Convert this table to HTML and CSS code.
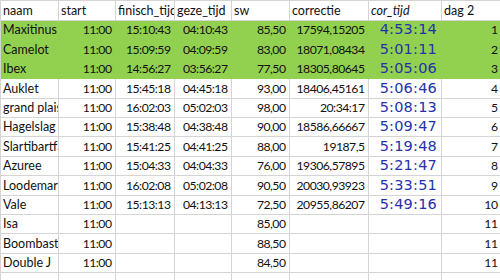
FILE: index.html
```html
<!DOCTYPE html>
<html>
<head>
<meta charset="utf-8">
<link rel="stylesheet" href="styles.css">
</head>
<body>
<div class="sheet">
  <div class="row head">
    <div class="cell">naam</div><div class="cell">start</div><div class="cell">finisch_tijd</div><div class="cell">geze_tijd</div><div class="cell">sw</div><div class="cell">correctie</div><div class="cell it">cor_tijd</div><div class="cell">dag 2</div>
  </div>
  <div class="row hl">
    <div class="cell">Maxitinus</div><div class="cell r">11:00</div><div class="cell r">15:10:43</div><div class="cell r">04:10:43</div><div class="cell r">85,50</div><div class="cell r">17594,15205</div><div class="cell big">4:53:14</div><div class="cell r">1</div>
  </div>
  <div class="row hl">
    <div class="cell">Camelot</div><div class="cell r">11:00</div><div class="cell r">15:09:59</div><div class="cell r">04:09:59</div><div class="cell r">83,00</div><div class="cell r">18071,08434</div><div class="cell big">5:01:11</div><div class="cell r">2</div>
  </div>
  <div class="row hl">
    <div class="cell">Ibex</div><div class="cell r">11:00</div><div class="cell r">14:56:27</div><div class="cell r">03:56:27</div><div class="cell r">77,50</div><div class="cell r">18305,80645</div><div class="cell big">5:05:06</div><div class="cell r">3</div>
  </div>
  <div class="row">
    <div class="cell">Auklet</div><div class="cell r">11:00</div><div class="cell r">15:45:18</div><div class="cell r">04:45:18</div><div class="cell r">93,00</div><div class="cell r">18406,45161</div><div class="cell big">5:06:46</div><div class="cell r">4</div>
  </div>
  <div class="row">
    <div class="cell">grand plaisir</div><div class="cell r">11:00</div><div class="cell r">16:02:03</div><div class="cell r">05:02:03</div><div class="cell r">98,00</div><div class="cell r">20:34:17</div><div class="cell big">5:08:13</div><div class="cell r">5</div>
  </div>
  <div class="row">
    <div class="cell">Hagelslag</div><div class="cell r">11:00</div><div class="cell r">15:38:48</div><div class="cell r">04:38:48</div><div class="cell r">90,00</div><div class="cell r">18586,66667</div><div class="cell big">5:09:47</div><div class="cell r">6</div>
  </div>
  <div class="row">
    <div class="cell">Slartibartfast</div><div class="cell r">11:00</div><div class="cell r">15:41:25</div><div class="cell r">04:41:25</div><div class="cell r">88,00</div><div class="cell r">19187,5</div><div class="cell big">5:19:48</div><div class="cell r">7</div>
  </div>
  <div class="row">
    <div class="cell">Azuree</div><div class="cell r">11:00</div><div class="cell r">15:04:33</div><div class="cell r">04:04:33</div><div class="cell r">76,00</div><div class="cell r">19306,57895</div><div class="cell big">5:21:47</div><div class="cell r">8</div>
  </div>
  <div class="row">
    <div class="cell">Loodemar</div><div class="cell r">11:00</div><div class="cell r">16:02:08</div><div class="cell r">05:02:08</div><div class="cell r">90,50</div><div class="cell r">20030,93923</div><div class="cell big">5:33:51</div><div class="cell r">9</div>
  </div>
  <div class="row">
    <div class="cell">Vale</div><div class="cell r">11:00</div><div class="cell r">15:13:13</div><div class="cell r">04:13:13</div><div class="cell r">72,50</div><div class="cell r">20955,86207</div><div class="cell big">5:49:16</div><div class="cell r">10</div>
  </div>
  <div class="row">
    <div class="cell">Isa</div><div class="cell r">11:00</div><div class="cell"></div><div class="cell"></div><div class="cell r">85,00</div><div class="cell"></div><div class="cell"></div><div class="cell r">11</div>
  </div>
  <div class="row">
    <div class="cell">Boombast</div><div class="cell r">11:00</div><div class="cell"></div><div class="cell"></div><div class="cell r">88,50</div><div class="cell"></div><div class="cell"></div><div class="cell r">11</div>
  </div>
  <div class="row">
    <div class="cell">Double J</div><div class="cell r">11:00</div><div class="cell"></div><div class="cell"></div><div class="cell r">84,50</div><div class="cell"></div><div class="cell"></div><div class="cell r">11</div>
  </div>
  <div class="row">
    <div class="cell"></div><div class="cell"></div><div class="cell"></div><div class="cell"></div><div class="cell"></div><div class="cell"></div><div class="cell"></div><div class="cell"></div>
  </div>
</div>
</body>
</html>
```
FILE: styles.css
```css
html, body {
  margin: 0;
  padding: 0;
  background: #ffffff;
}
body {
  width: 500px;
  height: 280px;
  overflow: hidden;
  font-family: "Lato", "Open Sans", sans-serif;
  font-size: 12.5px;
  color: #111111;
}
.sheet {
  width: 504px;
  border-top: 1px solid #d4d4d4;
  border-left: 1px solid #d4d4d4;
}
.row {
  display: grid;
  grid-template-columns: 58px 57px 59px 57px 58px 79px 73px 60px;
  height: 19.4px;
  box-sizing: border-box;
}
.row.head {
  height: 20px;
}
.cell {
  box-sizing: border-box;
  border-right: 1px solid #d4d4d4;
  border-bottom: 1px solid #d4d4d4;
  padding: 0 3px 2px 2px;
  overflow: hidden;
  white-space: nowrap;
  display: flex;
  align-items: flex-end;
  line-height: 14px;
}
.cell.r {
  justify-content: flex-end;
  font-size: 12.2px;
  letter-spacing: -0.5px;
  padding-right: 3.5px;
}
.cell.it {
  font-style: italic;
}
.cell.big {
  justify-content: flex-end;
  padding-right: 4px;
  padding-bottom: 3px;
  font-family: "DejaVu Sans", "Verdana", sans-serif;
  font-size: 14.5px;
  letter-spacing: 0.2px;
  color: #2432a8;
  line-height: 14px;
}
.row.hl .cell {
  background: #92d050;
  border-color: #92d050;
}
```
